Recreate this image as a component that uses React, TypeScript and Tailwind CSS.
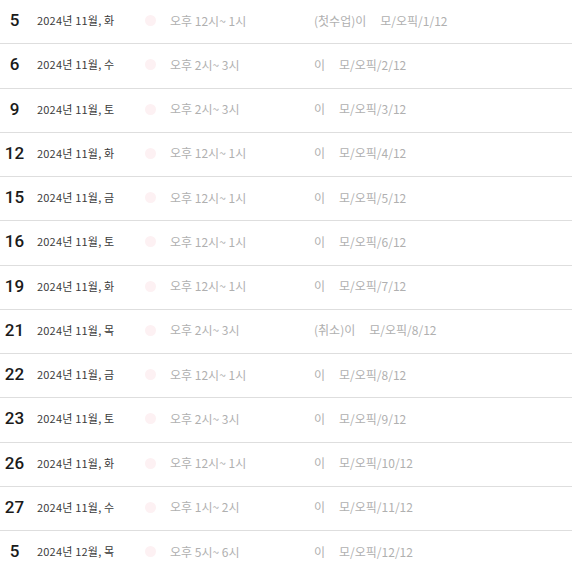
import React from "react";

const rows = [
  { day: "5", date: "2024년 11월, 화", time: "오후 12시~ 1시", tag: "(첫수업)", count: "1/12" },
  { day: "6", date: "2024년 11월, 수", time: "오후 2시~ 3시", tag: "", count: "2/12" },
  { day: "9", date: "2024년 11월, 토", time: "오후 2시~ 3시", tag: "", count: "3/12" },
  { day: "12", date: "2024년 11월, 화", time: "오후 12시~ 1시", tag: "", count: "4/12" },
  { day: "15", date: "2024년 11월, 금", time: "오후 12시~ 1시", tag: "", count: "5/12" },
  { day: "16", date: "2024년 11월, 토", time: "오후 12시~ 1시", tag: "", count: "6/12" },
  { day: "19", date: "2024년 11월, 화", time: "오후 12시~ 1시", tag: "", count: "7/12" },
  { day: "21", date: "2024년 11월, 목", time: "오후 2시~ 3시", tag: "(취소)", count: "8/12" },
  { day: "22", date: "2024년 11월, 금", time: "오후 12시~ 1시", tag: "", count: "8/12" },
  { day: "23", date: "2024년 11월, 토", time: "오후 2시~ 3시", tag: "", count: "9/12" },
  { day: "26", date: "2024년 11월, 화", time: "오후 12시~ 1시", tag: "", count: "10/12" },
  { day: "27", date: "2024년 11월, 수", time: "오후 1시~ 2시", tag: "", count: "11/12" },
  { day: "5", date: "2024년 12월, 목", time: "오후 5시~ 6시", tag: "", count: "12/12" },
];

export default function App() {
  return (
    <div className="w-[572px] h-[571px] overflow-hidden bg-white font-['Noto_Sans_CJK_KR','Noto_Sans',sans-serif]">
      {rows.map((row, i) => (
        <div
          key={i}
          className="flex items-center h-[44.25px] border-b border-[#dedede] pb-[2px]"
        >
          {/* day number */}
          <div className="w-[29px] text-center font-['Roboto',sans-serif] text-[17px] font-medium text-[#1a1a1a] leading-none">
            {row.day}
          </div>

          {/* date */}
          <div className="ml-[8px] w-[108px] text-[11px] tracking-[0.2px] text-[#3a3a3a] leading-none">
            {row.date}
          </div>

          {/* status dot */}
          <div className="w-[11px] h-[11px] rounded-full bg-[#fdf1f3]" />

          {/* time */}
          <div className="ml-[14px] w-[144px] text-[12px] text-[#b0b0b0] leading-none">
            {row.time}
          </div>

          {/* note */}
          <div className="flex text-[12px] text-[#b0b0b0] leading-none">
            <span>{row.tag}이</span>
            <span className="ml-[14px]">모/오픽/{row.count}</span>
          </div>
        </div>
      ))}
    </div>
  );
}
